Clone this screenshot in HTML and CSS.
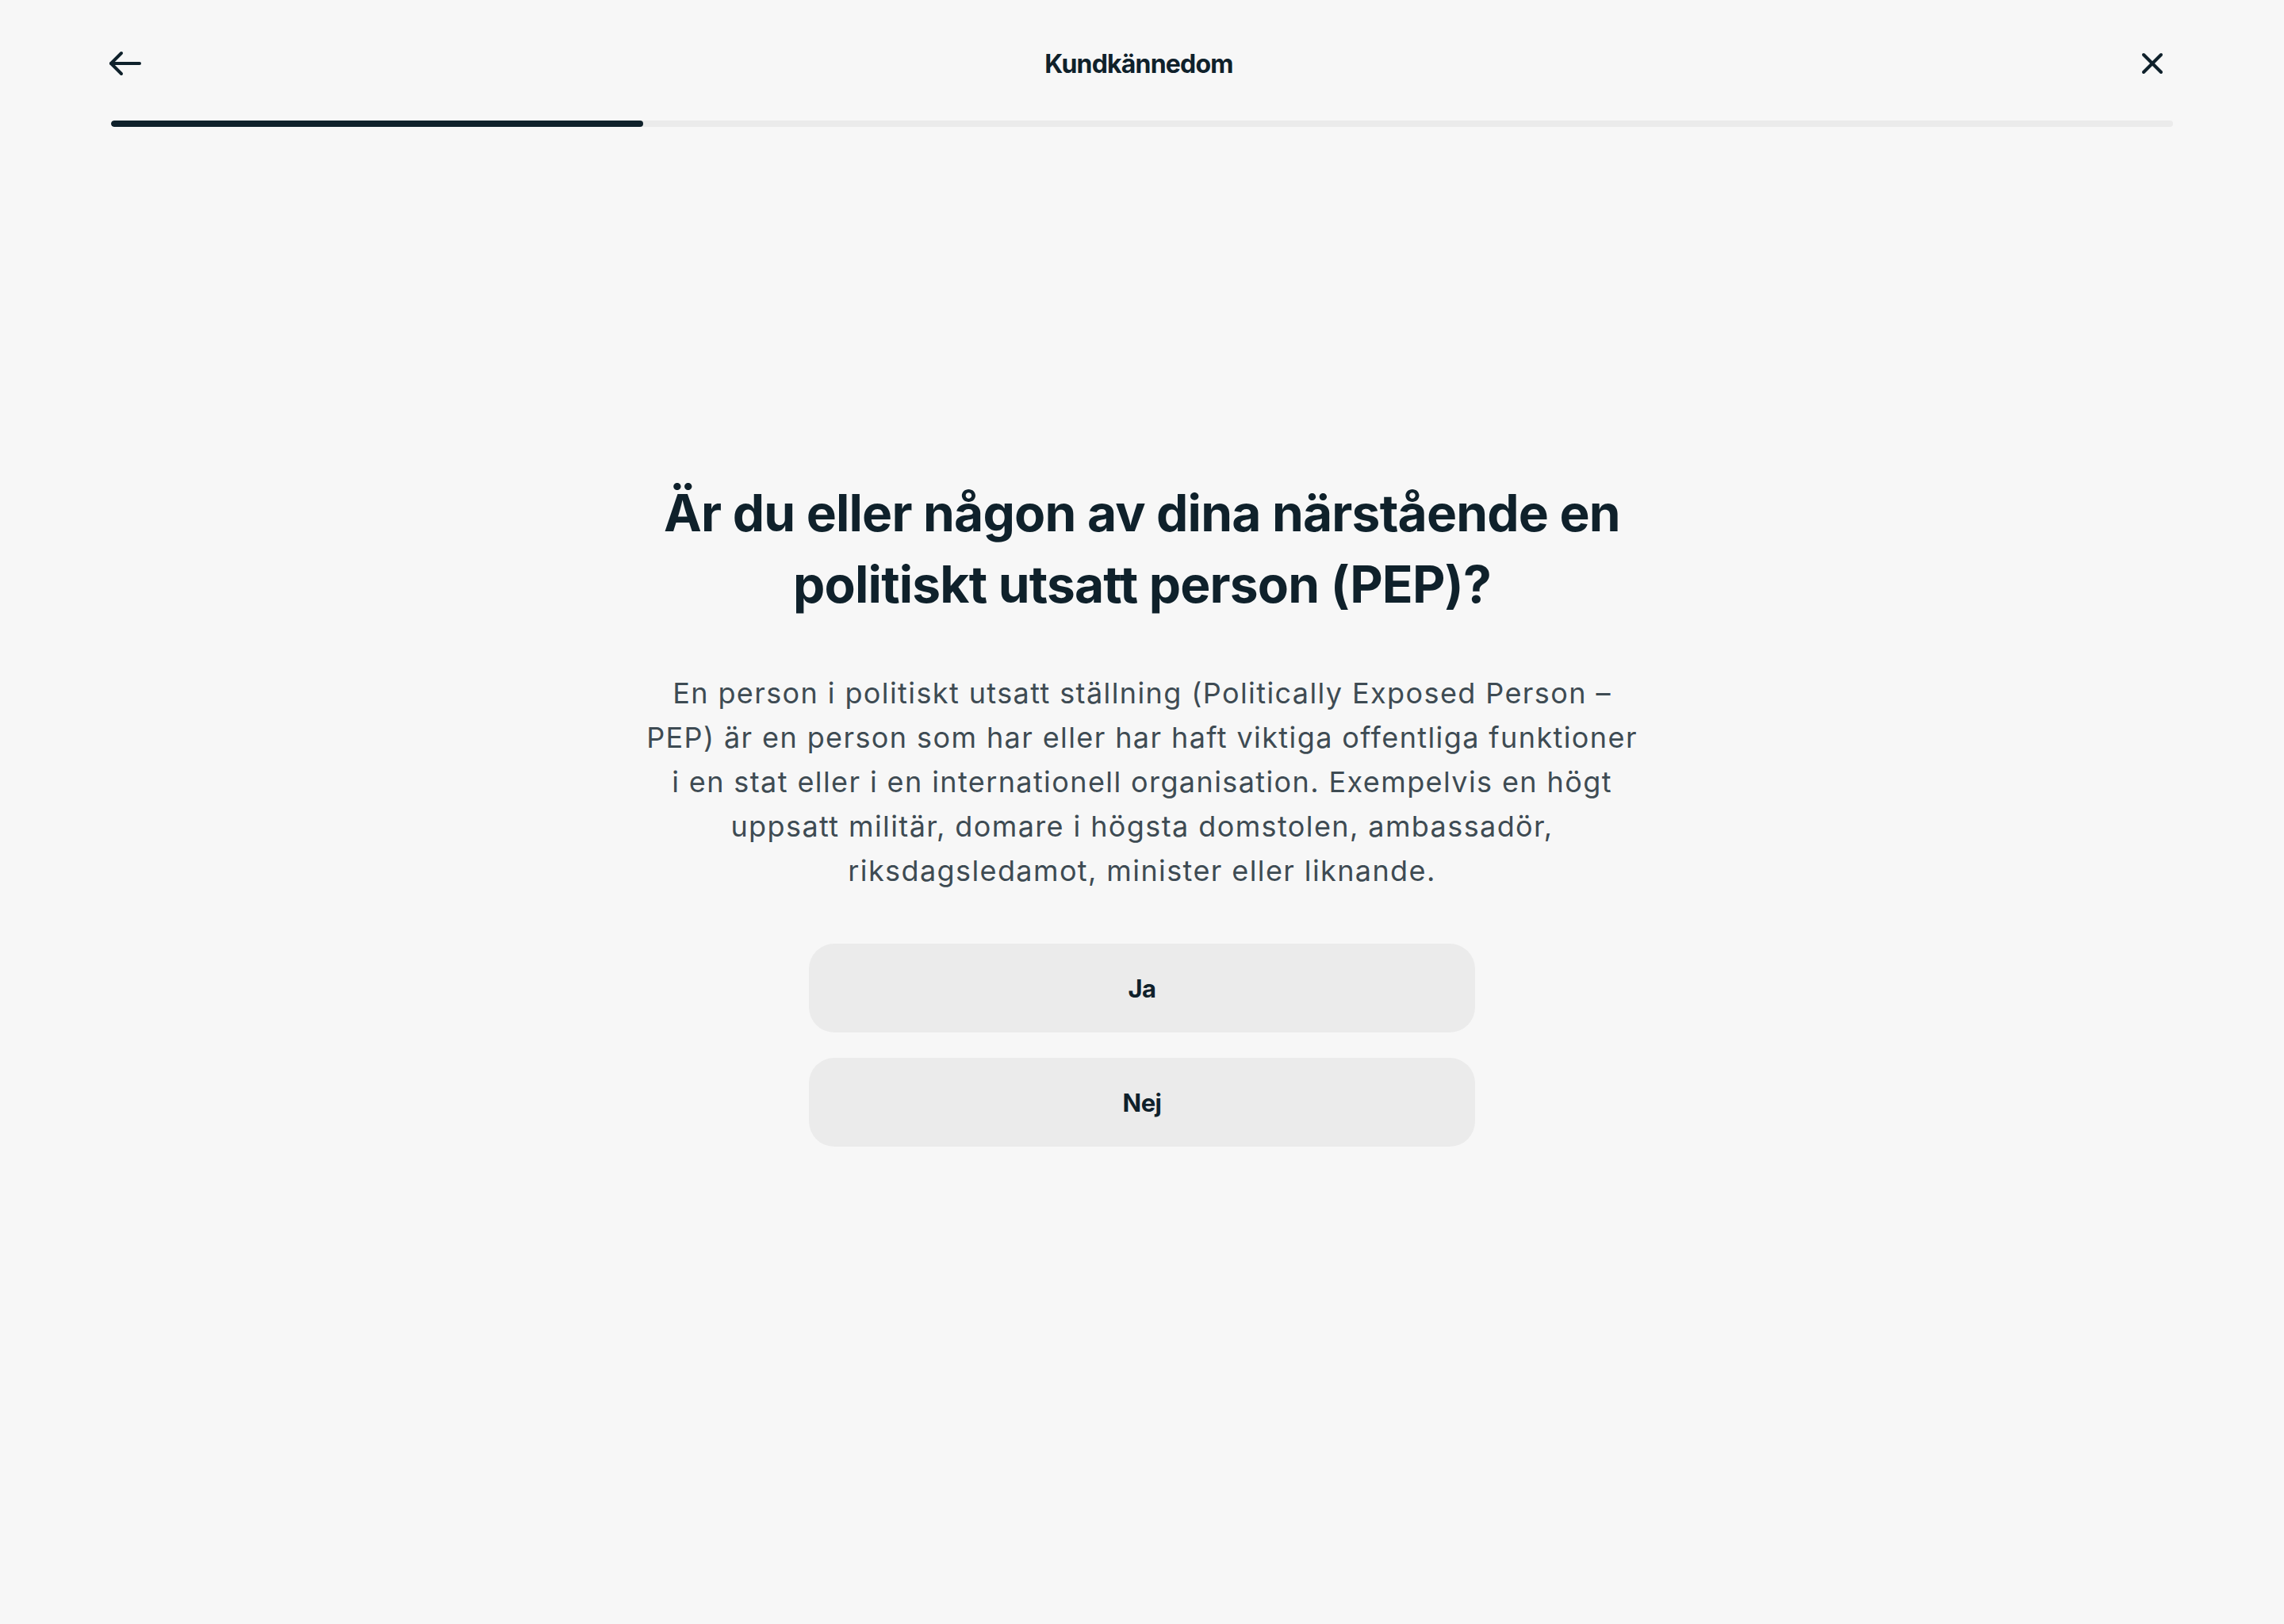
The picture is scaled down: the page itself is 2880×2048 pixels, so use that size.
FILE: index.html
```html
<!DOCTYPE html>
<html lang="sv">

<head>
  <meta charset="UTF-8" />
  <meta name="viewport" content="width=device-width, initial-scale=1.0" />
  <title>Kundkännedom</title>
  <link rel="stylesheet" href="styles.css">
</head>

<body>
  <header class="topbar">
    <div class="topbar-row">
      <button class="icon-btn back" aria-label="Tillbaka">
        <svg width="44" height="44" viewBox="0 0 44 44" fill="none" stroke="currentColor" stroke-width="4"
          stroke-linecap="round" stroke-linejoin="round">
          <path d="M40 22H4" />
          <path d="M17 9L4 22l13 13" />
        </svg>
      </button>
      <div class="topbar-title">Kundkännedom</div>
      <button class="icon-btn close" aria-label="Stäng">
        <svg width="44" height="44" viewBox="0 0 44 44" fill="none" stroke="currentColor" stroke-width="4"
          stroke-linecap="round">
          <path d="M11 11l22 22" />
          <path d="M33 11L11 33" />
        </svg>
      </button>
    </div>
    <div class="progress">
      <div class="progress-fill" style="width:25.8%"></div>
    </div>
  </header>

  <main class="question">
    <h1>Är du eller någon av dina närstående en politiskt utsatt person (PEP)?</h1>
    <p>En person i politiskt utsatt ställning (Politically Exposed Person – PEP) är en person som har eller har haft
      viktiga offentliga funktioner i en stat eller i en internationell organisation. Exempelvis en högt uppsatt
      militär, domare i högsta domstolen, ambassadör, riksdagsledamot, minister eller liknande.</p>
    <div class="answers">
      <button class="answer">Ja</button>
      <button class="answer">Nej</button>
    </div>
  </main>
</body>

</html>
```

FILE: styles.css
```css
body {
  margin: 0;
  background: #f7f7f7;
  color: #0f212b;
  font-family: 'Inter', 'Noto Sans', sans-serif;
}

.topbar {
  padding: 40px 140px 0;
}

.topbar-row {
  height: 80px;
  display: flex;
  align-items: center;
  justify-content: space-between;
}

.icon-btn {
  width: 44px;
  height: 44px;
  padding: 0;
  border: none;
  background: none;
  color: #0f212b;
  cursor: pointer;
  display: flex;
}

.icon-btn.back {
  margin-left: -4px;
}

.icon-btn.close {
  margin-right: 4px;
}

.topbar-title {
  font-size: 32px;
  font-weight: 700;
  letter-spacing: -0.8px;
}

.progress {
  margin-top: 32px;
  height: 8px;
  border-radius: 4px;
  background: #ebebeb;
  overflow: hidden;
}

.progress-fill {
  height: 100%;
  background: #0f212b;
  border-radius: 4px;
}

.question {
  width: 1264px;
  margin: 442px auto 0;
  text-align: center;
}

.question h1 {
  margin: 0 auto;
  max-width: 1240px;
  font-size: 64px;
  line-height: 90px;
  font-weight: 700;
  letter-spacing: -0.8px;
}

.question p {
  margin: 64px 0 0;
  font-size: 36px;
  line-height: 56px;
  letter-spacing: 1.4px;
  color: #3e4b53;
}

.answers {
  margin: 64px auto 0;
  width: 840px;
  display: flex;
  flex-direction: column;
  gap: 32px;
}

.answer {
  height: 112px;
  border: none;
  border-radius: 32px;
  background: #ebebeb;
  color: #0f212b;
  font-family: inherit;
  font-size: 31px;
  font-weight: 700;
  letter-spacing: -0.5px;
  cursor: pointer;
}
```
